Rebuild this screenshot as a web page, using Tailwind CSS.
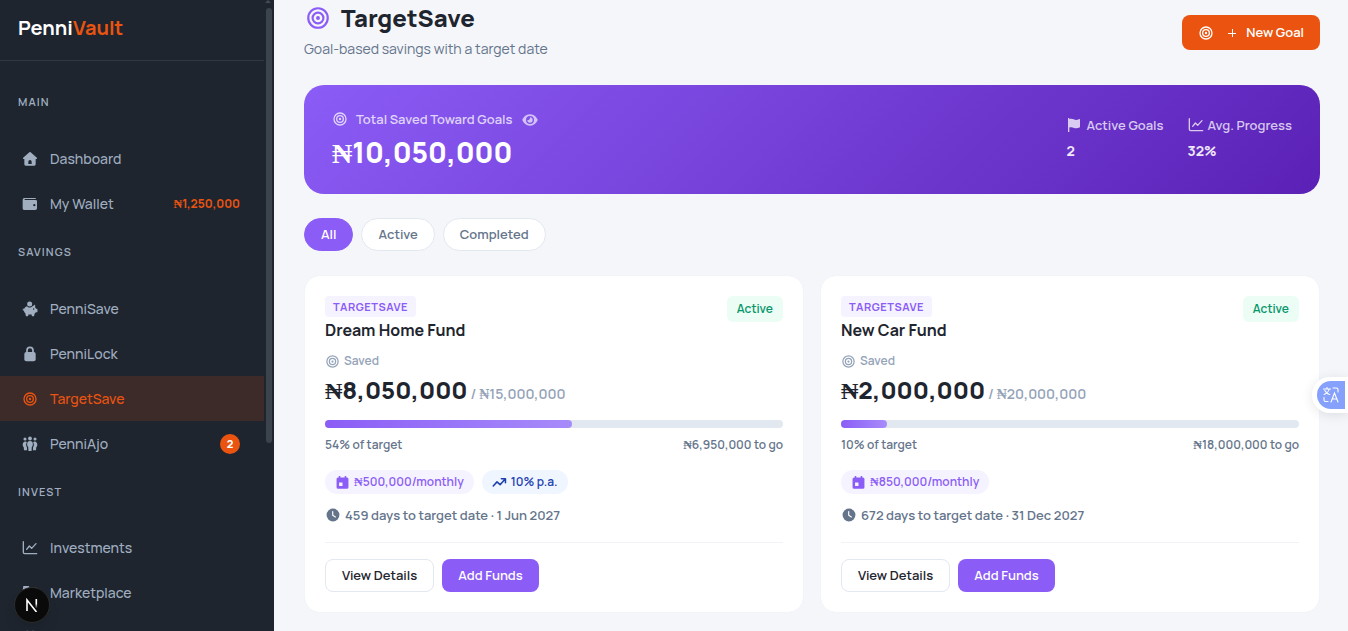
<!DOCTYPE html>
<html lang="en">
<head>
  <meta charset="UTF-8" />
  <meta name="viewport" content="width=device-width, initial-scale=1.0"/>
  <title>TargetSave — PenniVault</title>
  <script src="https://cdn.jsdelivr.net/npm/@tailwindcss/browser@4"></script>
</head>
<body class="h-screen overflow-hidden flex bg-[#f4f6fa] font-['Manrope','Inter','Liberation_Sans',sans-serif] text-[#1e252e]">

  <!-- Icons -->
  <svg class="hidden">
    <symbol id="target" viewBox="0 0 24 24"><g fill="none" stroke="currentColor" stroke-width="2"><circle cx="12" cy="12" r="9"/><circle cx="12" cy="12" r="5"/></g><circle cx="12" cy="12" r="1.800" fill="currentColor"/></symbol>
    <symbol id="home" viewBox="0 0 24 24"><path fill="currentColor" fill-rule="evenodd" d="M11 1.900a1.500 1.500 0 0 1 2 0l9.300 8.400c.7.700.3 1.700-.6 1.700H20.500v8a2 2 0 0 1-2 2h-13a2 2 0 0 1-2-2v-8H2.300c-.9 0-1.300-1-.6-1.700zM9.500 19.500h5V16a2.500 2.500 0 0 0-5 0z"/></symbol>
    <symbol id="wallet" viewBox="0 0 24 24"><path fill="currentColor" fill-rule="evenodd" d="M3.500 3h16A1.500 1.500 0 0 1 21 4.500H4v1.500H20.500a2 2 0 0 1 2 2V18.500a2.500 2.500 0 0 1-2.500 2.500h-16A2.500 2.500 0 0 1 1 18.500V5.500A2.500 2.500 0 0 1 3.500 3zM18.500 12a1.700 1.700 0 1 0 0 3.400 1.700 1.700 0 0 0 0-3.400z"/></symbol>
    <symbol id="piggy" viewBox="0 0 24 24"><circle cx="11.500" cy="4.500" r="3.800" fill="currentColor"/><path fill="currentColor" fill-rule="evenodd" d="M7.500 7.700c1 1.300 2.400 2 4 2s3-.7 4-2l.5.200 3-2.200c.4-.2.800 0 .8.500l-.2 3.100c.7.700 1.200 1.400 1.600 2.200h1c.6 0 1 .4 1 1v3.500c0 .6-.4 1-1 1h-1.400c-.5.900-1.200 1.600-2 2.200l-.5 2.800c-.1.400-.4.700-.9.700h-1.800c-.5 0-.8-.3-.9-.7l-.3-1.800H9.600l-.3 1.800c-.1.400-.4.700-.9.700H6.600c-.5 0-.8-.3-.9-.7L5 18.500c-1.200-1-2-2.300-2.200-3.800C1.600 14.400 1 13.300 1 12c0-.5.300-.9.800-.9s.8.400.8.900c0 .3.100.6.300.8.300-2.300 2.200-4.300 4.600-5.100zM17.500 11a1 1 0 1 0 0 2 1 1 0 0 0 0-2z"/></symbol>
    <symbol id="lock" viewBox="0 0 24 24"><rect x="3.500" y="9" width="17" height="14" rx="3" fill="currentColor"/><path fill="none" stroke="currentColor" stroke-width="2.600" d="M7.500 10V6.500a4.500 4.500 0 0 1 9 0V10"/></symbol>
    <symbol id="people" viewBox="0 0 24 24"><g fill="currentColor"><circle cx="12" cy="3.700" r="2.900"/><circle cx="4.500" cy="4.500" r="2.300"/><circle cx="19.500" cy="4.500" r="2.300"/><path d="M12 7.500a4.500 4.500 0 0 1 4.300 4.500c0 2-.6 3.600-1.600 4.500L14.300 22.500H9.700l-.4-6c-1-.9-1.600-2.500-1.600-4.500A4.500 4.500 0 0 1 12 7.500zM5.800 8.300C3 7.800 1 10 1 13c0 1.700.6 2.900 1.600 3.700L3 21.500h4.600L7.400 17C6 15 5.700 11.500 7.300 9.200zM18.200 8.300C21 7.800 23 10 23 13c0 1.700-.6 2.900-1.600 3.700L21 21.500h-4.600l.2-4.500c1.400-2 1.700-5.500.1-7.800z"/></g></symbol>
    <symbol id="chart" viewBox="0 0 24 24"><g fill="none" stroke="currentColor" stroke-width="2" stroke-linecap="round" stroke-linejoin="round"><path d="M2 2.500V18.500A2 2 0 0 0 4 20.500H22"/><path d="M7 14l4-5 3.500 3.500L21 5.500"/></g></symbol>
    <symbol id="store" viewBox="0 0 24 24"><path fill="currentColor" d="M2 1.500h8l2 2.500h10v4H1zM3 9h18v12H3z"/></symbol>
    <symbol id="group" viewBox="0 0 24 24"><path fill="currentColor" d="M8 1a4 4 0 1 1 0 8 4 4 0 0 1 0-8zm8.500 0a4 4 0 1 1 0 8 4 4 0 0 1 0-8zM1 20c0-4 3-7 7-7s7 3 7 7zm16 0c0-3-1-5-2-7 4 0 8 2 8 7z"/></symbol>
    <symbol id="flag" viewBox="0 0 24 24"><path fill="currentColor" d="M3 1.500h2v1.700c2.400-.9 4.400-.6 6.500.3 2.600 1.200 5.100 1.200 8.500-.5.600-.2 1 .1 1 .7v11c0 .5-.2.800-.7 1-3.500 1.600-6.100 1.500-9 .3-2.100-.9-4-1.100-6.300-.3V22.500H3z"/></symbol>
    <symbol id="eye" viewBox="0 0 24 24"><path fill="currentColor" fill-rule="evenodd" d="M12 3.500c6 0 9.700 4.300 11.300 7.700.3.500.3 1.100 0 1.600C21.700 16.200 18 20.500 12 20.500S2.300 16.200.7 12.800a1.800 1.800 0 0 1 0-1.600C2.300 7.800 6 3.500 12 3.500zM12 6a6 6 0 1 0 0 12 6 6 0 0 0 0-12z"/><path fill="currentColor" d="M12 8a4 4 0 1 1-4 4c1.500.8 4.500-.5 4-4z"/></symbol>
    <symbol id="calendar" viewBox="0 0 24 24"><path fill="currentColor" fill-rule="evenodd" d="M6 1.500h2.500V4h7V1.500H18V4h1a2.500 2.500 0 0 1 2.500 2.500v13A2.500 2.500 0 0 1 19 22H5a2.500 2.500 0 0 1-2.500-2.500v-13A2.500 2.500 0 0 1 5 4h1zM6.500 12v5.500H12V12z"/></symbol>
    <symbol id="trend" viewBox="0 0 24 24"><path fill="none" stroke="currentColor" stroke-width="2.500" stroke-linecap="round" stroke-linejoin="round" d="M2 17.500l6-6.500 5 4.500 8-9M15 6h6.500v6.500"/></symbol>
    <symbol id="clock" viewBox="0 0 24 24"><circle cx="12" cy="12" r="11" fill="currentColor"/><path fill="none" stroke="#fff" stroke-width="2" stroke-linecap="round" d="M11.500 6v6.500l4.500 3"/></symbol>
  </svg>

  <!-- Sidebar -->
  <aside class="relative w-[274px] shrink-0 h-full overflow-hidden bg-[#1e252e] pr-2.5">
    <div class="h-[61px] border-b border-[#303843] px-[18px] pt-3">
      <a href="#" class="text-xl leading-8 font-bold text-white">Penni<span class="text-[#ea5410]">Vault</span></a>
    </div>

    <nav class="pt-[15px] text-sm font-medium text-[#a0aec0]">
      <h2 class="px-[18px] pt-[18px] pb-[26px] text-[11px] leading-4 font-semibold tracking-widest">MAIN</h2>
      <a href="#" class="flex items-center h-[45px] pl-[22px] pr-6 gap-3"><svg class="size-4"><use href="#home"/></svg>Dashboard</a>
      <a href="#" class="flex items-center h-[45px] pl-[22px] pr-6 gap-3"><svg class="size-4"><use href="#wallet"/></svg>My Wallet<span class="ml-auto text-xs font-bold text-[#ea5410]"><span class="font-['Liberation_Serif',serif] leading-none">₦</span>1,250,000</span></a>

      <h2 class="px-[18px] pt-[18px] pb-[26px] text-[11px] leading-4 font-semibold tracking-widest">SAVINGS</h2>
      <a href="#" class="flex items-center h-[45px] pl-[22px] pr-6 gap-3"><svg class="size-4"><use href="#piggy"/></svg>PenniSave</a>
      <a href="#" class="flex items-center h-[45px] pl-[22px] pr-6 gap-3"><svg class="size-4"><use href="#lock"/></svg>PenniLock</a>
      <a href="#" class="flex items-center h-[45px] pl-[22px] pr-6 gap-3 bg-[#3d2b2a] text-[#ea5410]"><svg class="size-4"><use href="#target"/></svg>TargetSave</a>
      <a href="#" class="flex items-center h-[45px] pl-[22px] pr-6 gap-3"><svg class="size-4"><use href="#people"/></svg>PenniAjo<span class="ml-auto size-5 rounded-full bg-[#ea5410] text-center text-[11px] leading-5 font-extrabold text-white">2</span></a>

      <h2 class="px-[18px] pt-[18px] pb-[25px] text-[11px] leading-4 font-semibold tracking-widest">INVEST</h2>
      <a href="#" class="flex items-center h-[45px] pl-[22px] pr-6 gap-3"><svg class="size-4"><use href="#chart"/></svg>Investments</a>
      <a href="#" class="flex items-center h-[45px] pl-[22px] pr-6 gap-3"><svg class="size-4"><use href="#store"/></svg>Marketplace</a>
      <a href="#" class="flex items-center h-[45px] pl-[22px] pr-6 gap-3" aria-label="Community"><svg class="size-4"><use href="#group"/></svg></a>
    </nav>

    <!-- Scrollbar -->
    <div class="absolute top-0 right-[3px] border-x-3 border-b-3 border-x-transparent border-b-[#434b56]"></div>
    <div class="absolute top-2 right-0.5 w-1.5 h-[435px] rounded-full bg-[#3b434d]"></div>
  </aside>

  <!-- Content -->
  <main class="flex-1 min-w-0 h-full overflow-hidden pt-0.5 pl-[30px] pr-7">
    <header class="flex items-center justify-between mb-[22px]">
      <div>
        <h1 class="flex items-center gap-2.5 text-2xl leading-8 font-extrabold"><svg class="size-[26px] ml-px text-[#8b5cf6]"><use href="#target"/></svg>TargetSave</h1>
        <p class="mt-1 mb-1 text-sm leading-[21px] text-[#64748b]">Goal-based savings with a target date</p>
      </div>
      <button class="flex items-center h-[35px] px-4 rounded-lg bg-[#ea5410] text-[13px] font-semibold text-white">
        <svg class="size-4 mr-3.5"><use href="#target"/></svg>
        <svg class="size-2 mr-2.5" viewBox="0 0 8 8"><path fill="none" stroke="currentColor" d="M0 4.500h8M4.500 0v8"/></svg>
        New Goal
      </button>
    </header>

    <!-- Summary -->
    <section class="flex items-center justify-between px-7 py-6 rounded-[20px] bg-linear-[135deg,#8b5cf6,#5b21b6] text-white">
      <div>
        <div class="flex items-center text-[13px] leading-5 font-semibold text-white/75"><svg class="size-4 mr-2"><use href="#target"/></svg>Total Saved Toward Goals
          <button class="ml-2.5 text-white/65" aria-label="Hide balance"><svg class="size-4 mt-0.5"><use href="#eye"/></svg></button>
        </div>
        <div class="mt-1.5 text-[28px] leading-[35px] font-extrabold"><span class="font-['Liberation_Serif',serif] leading-none">₦</span>10,050,000</div>
      </div>
      <dl class="flex gap-6 pb-[3px] text-[13px] leading-5 font-semibold">
        <div>
          <dt class="flex items-center gap-1 text-white/75"><svg class="size-4"><use href="#flag"/></svg>Active Goals</dt>
          <dd class="mt-1.5 text-sm leading-5 font-bold text-white/90">2</dd>
        </div>
        <div>
          <dt class="flex items-center gap-1 text-white/75"><svg class="size-4"><use href="#chart"/></svg>Avg. Progress</dt>
          <dd class="mt-1.5 text-sm leading-5 font-bold text-white/90">32%</dd>
        </div>
      </dl>
    </section>

    <!-- Filters -->
    <div class="flex gap-2 mt-6 mb-6 text-[13px] font-semibold text-[#64748b]">
      <button class="h-[33px] px-4 rounded-full border border-[#8b5cf6] bg-[#8b5cf6] text-white">All</button>
      <button class="h-[33px] px-4 rounded-full border border-[#e2e8f0] bg-white">Active</button>
      <button class="h-[33px] px-4 rounded-full border border-[#e2e8f0] bg-white">Completed</button>
    </div>

    <!-- Goals -->
    <div class="grid grid-cols-2 gap-4">
      <article class="rounded-2xl border border-[#f1f5f9] bg-white p-5">
        <div class="flex items-start justify-between">
          <div>
            <div class="w-fit px-2 rounded-sm bg-[#f5f3ff] text-[11px] leading-[21px] font-bold tracking-wider text-[#8b5cf6]">TARGETSAVE</div>
            <h3 class="text-base leading-[26px] font-bold">Dream Home Fund</h3>
          </div>
          <span class="px-2.5 rounded-md bg-[#ecfdf5] text-xs leading-[26px] font-semibold text-[#059669]">Active</span>
        </div>
        <div class="flex items-center gap-1 mt-2 text-xs leading-5 font-semibold text-[#94a3b8]"><svg class="size-[15px]"><use href="#target"/></svg>Saved</div>
        <div class="flex items-baseline gap-[3px] mt-0.5 leading-[33px]">
          <span class="text-2xl leading-[33px] font-extrabold"><span class="font-['Liberation_Serif',serif] leading-none">₦</span>8,050,000</span>
          <span class="text-sm leading-5 font-semibold text-[#94a3b8]">/ <span class="font-['Liberation_Serif',serif] leading-none">₦</span>15,000,000</span>
        </div>
        <div class="mt-3.5 h-2 rounded-full bg-[#e2e8f0]"><div class="h-2 rounded-full bg-linear-to-r from-[#8b5cf6] to-[#a78bfa]" style="width: 54%"></div></div>
        <div class="flex justify-between mt-2 text-xs leading-[18px] font-semibold text-[#64748b]"><span>54% of target</span><span><span class="font-['Liberation_Serif',serif] leading-none">₦</span>6,950,000 to go</span></div>
        <div class="flex gap-2 mt-4 text-xs leading-6 font-semibold">
          <span class="flex items-center gap-1 px-2.5 rounded-full bg-[#f5f3ff] text-[#8b5cf6]"><svg class="size-[15px]"><use href="#calendar"/></svg><span><span class="font-['Liberation_Serif',serif] leading-none">₦</span>500,000/monthly</span></span>
          <span class="flex items-center gap-1 px-2.5 rounded-full bg-[#eff6ff] text-[#1e40af]"><svg class="size-[15px]"><use href="#trend"/></svg>10% p.a.</span>
        </div>
        <div class="flex items-center gap-1 mt-3 text-[13px] leading-[18px] font-semibold text-[#64748b]"><svg class="size-4 p-px"><use href="#clock"/></svg>459 days to target date · 1 Jun 2027</div>
        <div class="flex gap-2 mt-[18px] pt-4 border-t border-[#f1f3f8] text-[13px] font-semibold">
          <button class="h-[33px] px-4 rounded-lg border border-[#e2e8f0] bg-white">View Details</button>
          <button class="h-[33px] px-4 rounded-lg bg-[#8b5cf6] text-white">Add Funds</button>
        </div>
      </article>

      <article class="rounded-2xl border border-[#f1f5f9] bg-white p-5">
        <div class="flex items-start justify-between">
          <div>
            <div class="w-fit px-2 rounded-sm bg-[#f5f3ff] text-[11px] leading-[21px] font-bold tracking-wider text-[#8b5cf6]">TARGETSAVE</div>
            <h3 class="text-base leading-[26px] font-bold">New Car Fund</h3>
          </div>
          <span class="px-2.5 rounded-md bg-[#ecfdf5] text-xs leading-[26px] font-semibold text-[#059669]">Active</span>
        </div>
        <div class="flex items-center gap-1 mt-2 text-xs leading-5 font-semibold text-[#94a3b8]"><svg class="size-[15px]"><use href="#target"/></svg>Saved</div>
        <div class="flex items-baseline gap-[3px] mt-0.5 leading-[33px]">
          <span class="text-2xl leading-[33px] font-extrabold"><span class="font-['Liberation_Serif',serif] leading-none">₦</span>2,000,000</span>
          <span class="text-sm leading-5 font-semibold text-[#94a3b8]">/ <span class="font-['Liberation_Serif',serif] leading-none">₦</span>20,000,000</span>
        </div>
        <div class="mt-3.5 h-2 rounded-full bg-[#e2e8f0]"><div class="h-2 rounded-full bg-linear-to-r from-[#8b5cf6] to-[#a78bfa]" style="width: 10%"></div></div>
        <div class="flex justify-between mt-2 text-xs leading-[18px] font-semibold text-[#64748b]"><span>10% of target</span><span><span class="font-['Liberation_Serif',serif] leading-none">₦</span>18,000,000 to go</span></div>
        <div class="flex gap-2 mt-4 text-xs leading-6 font-semibold">
          <span class="flex items-center gap-1 px-2.5 rounded-full bg-[#f5f3ff] text-[#8b5cf6]"><svg class="size-[15px]"><use href="#calendar"/></svg><span><span class="font-['Liberation_Serif',serif] leading-none">₦</span>850,000/monthly</span></span>
        </div>
        <div class="flex items-center gap-1 mt-3 text-[13px] leading-[18px] font-semibold text-[#64748b]"><svg class="size-4 p-px"><use href="#clock"/></svg>672 days to target date · 31 Dec 2027</div>
        <div class="flex gap-2 mt-[18px] pt-4 border-t border-[#f1f3f8] text-[13px] font-semibold">
          <button class="h-[33px] px-4 rounded-lg border border-[#e2e8f0] bg-white">View Details</button>
          <button class="h-[33px] px-4 rounded-lg bg-[#8b5cf6] text-white">Add Funds</button>
        </div>
      </article>
    </div>
  </main>

  <!-- Dev tools badge -->
  <button class="fixed left-3.5 bottom-2 size-9 rounded-full border border-[#2c2c2c] bg-[#0a0a0a] flex items-center justify-center shadow-lg" aria-label="Dev tools">
    <svg class="size-3.5" viewBox="0 0 14 14" fill="none" stroke-width="1.600">
      <defs>
        <linearGradient id="fade" x1="0" y1="0" x2="0" y2="1"><stop offset=".5" stop-color="#fff"/><stop offset="1" stop-color="#fff" stop-opacity="0.1"/></linearGradient>
      </defs>
      <path d="M2 13V2L11.500 14" stroke="#fff"/>
      <rect x="10.500" y="1" width="1.600" height="9" fill="url(#fade)"/>
    </svg>
  </button>

  <!-- Translate widget -->
  <div class="fixed right-0 top-[377px] pl-[5px] py-1 pr-[3px] rounded-l-full bg-white shadow-[0_2px_12px_rgba(0,0,0,0.1)]">
    <button class="block p-1.5 rounded-l-full rounded-r-xs bg-[#86a1fb]" aria-label="Translate">
      <svg class="size-4" viewBox="0 0 16 16" fill="none" stroke="#fff" stroke-width="1.100" stroke-linecap="round">
        <path d="M.5 2h7M4 .5V2M1.200 7.500C4 6.200 5.800 4 6.200 2M1.800 3.500C2.800 5.500 4.500 7 6.800 7.500M10 1h3.500a1.500 1.500 0 0 1 1.500 1.500V5M1 10.500V13a1.500 1.500 0 0 0 1.500 1.500H5M8 15l3.500-9L15 15M9.200 12h4.600"/>
      </svg>
    </button>
  </div>
</body>
</html>
